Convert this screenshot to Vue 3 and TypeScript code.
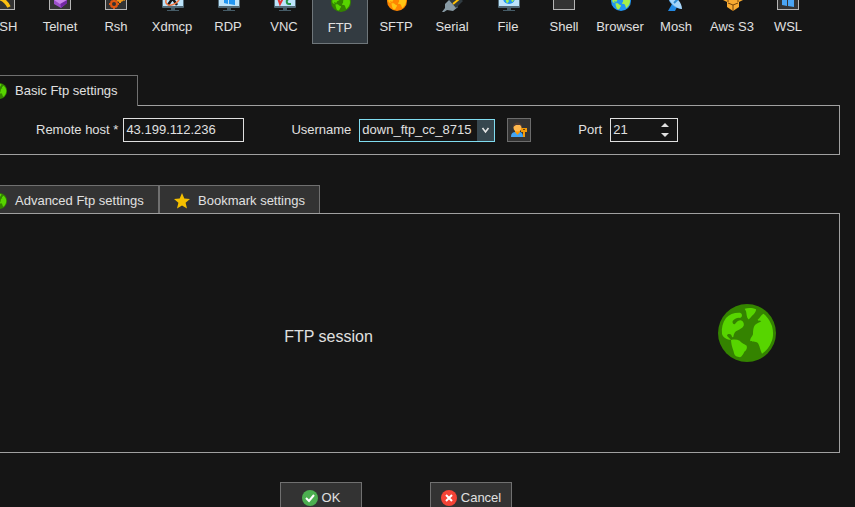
<script setup lang="ts">
import { ref } from 'vue'

interface Session {
  name: string
  icon: string
}

const sessions: Session[] = [
  { name: 'SSH', icon: 'key' },
  { name: 'Telnet', icon: 'cube' },
  { name: 'Rsh', icon: 'gears' },
  { name: 'Xdmcp', icon: 'x' },
  { name: 'RDP', icon: 'windows' },
  { name: 'VNC', icon: 'vnc' },
  { name: 'FTP', icon: 'globe' },
  { name: 'SFTP', icon: 'globe-orange' },
  { name: 'Serial', icon: 'plug' },
  { name: 'File', icon: 'file' },
  { name: 'Shell', icon: 'shell' },
  { name: 'Browser', icon: 'globe-blue' },
  { name: 'Mosh', icon: 'dish' },
  { name: 'Aws S3', icon: 'boxes' },
  { name: 'WSL', icon: 'wsl' },
]

const boxed = ['key', 'cube', 'gears', 'shell', 'wsl']
const screens = ['x', 'windows', 'vnc', 'file']

const active = ref('FTP')
const host = ref('43.199.112.236')
const username = ref('down_ftp_cc_8715')
const port = ref(21)
</script>

<template>
  <main class="page">
    <svg class="defs" aria-hidden="true">
      <symbol id="land" viewBox="0 0 174 174">
        <path d="M12 90C10 72 14 56 24 42C34 30 50 25 66 26C74 29 74 39 66 42C58 40 49 45 44 51C42 58 47 62 51 60C56 54 61 49 68 49C76 51 79 59 77 65C73 73 65 75 60 79C50 82 48 90 46 99C42 101 42 98 40 93C37 89 29 89 27 94C27 99 34 101 39 108C28 107 15 101 12 90Z" />
        <path d="M39 108C48 106 57 106 65 110C70 117 79 120 86 125C88 132 86 138 79 143C76 150 72 157 66 160C57 159 50 156 48 148C47 138 40 128 39 108Z" />
        <path d="M80 14C90 11 104 11 114 16C115 23 107 32 101 37C96 43 92 47 91 46C85 40 86 28 84 22Z" />
        <path d="M136 29C144 33 157 51 162 66C167 85 166 101 160 114C155 129 144 142 132 149C127 140 126 128 121 119C116 111 105 115 97 111C94 105 103 98 105 91C105 80 106 68 111 63C117 57 126 56 130 51C125 49 120 52 119 47C126 42 129 32 136 29Z" />
      </symbol>
      <symbol id="globe" viewBox="0 0 174 174">
        <circle cx="87" cy="87" r="87" fill="#348300" />
        <use href="#land" width="174" height="174" fill="#57d500" />
      </symbol>
      <symbol id="globe-orange" viewBox="0 0 174 174">
        <circle cx="87" cy="87" r="87" fill="#ff8500" />
        <use href="#land" width="174" height="174" fill="#ffc514" />
      </symbol>
      <symbol id="globe-blue" viewBox="0 0 174 174">
        <circle cx="87" cy="87" r="87" fill="#2196f3" />
        <use href="#land" width="174" height="174" fill="#a5f04b" />
      </symbol>
    </svg>

    <nav class="sessions" aria-label="Session type">
      <button
        v-for="s in sessions"
        :key="s.name"
        type="button"
        class="session"
        :class="{ active: s.name === active }"
        @click="active = s.name"
      >
        <svg class="session-icon" viewBox="0 0 24 24" aria-hidden="true">
          <rect v-if="boxed.includes(s.icon)" x="1.5" y="0.5" width="21" height="21" fill="#333" stroke="#b5b5b5" />
          <template v-if="screens.includes(s.icon)">
            <path d="M11 20h4v2h4v1H7v-1h4z" fill="#465c67" />
            <rect x="2" y="2" width="22" height="18" rx="1" fill="#526a77" />
            <rect x="3" y="3" width="20" height="15" fill="#bde4fb" />
          </template>
          <path v-if="s.icon === 'key'" d="M4 10c6 0 10 3 13 9" fill="none" stroke="#fcc010" stroke-width="3.5" />
          <template v-else-if="s.icon === 'cube'">
            <path d="M6 7l7-3 6 3v8l-6 5-7-4z" fill="#9c4fca" />
            <path d="M12 12l7-3v6l-6 5z" fill="#7327a5" />
            <path d="M6 12l7-4 6 4-7 4z" fill="#cb86ec" />
          </template>
          <template v-else-if="s.icon === 'gears'">
            <circle cx="10" cy="16" r="3" fill="none" stroke="#df5712" stroke-width="2" />
            <path d="M10 11v2M10 19v2M5 16h2M13 16h2M7 13l1 1M12 18l1 1M13 13l-1 1M7 19l1-1" stroke="#df5712" stroke-width="2" />
            <circle cx="16" cy="10" r="3" fill="none" stroke="#f39816" stroke-width="2" />
            <path d="M16 13v2M19 11l2 1" stroke="#f39816" stroke-width="2" />
          </template>
          <template v-else-if="s.icon === 'x'">
            <path d="M8 4l9 13M17 4L8 17" stroke="#151515" stroke-width="2.5" />
            <ellipse cx="13" cy="11" rx="8" ry="5" transform="rotate(-35 13 11)" fill="none" stroke="#f1743e" stroke-width="1.5" />
          </template>
          <path v-else-if="s.icon === 'windows'" d="M8 6l4-1v5H8zM13 5l6-1v6h-6zM8 11h4v5l-4-1zM13 11h6v6l-6-1z" fill="#2196f3" />
          <template v-else-if="s.icon === 'vnc'">
            <path d="M6 10l2 6 3-6" fill="none" stroke="#e63232" stroke-width="2" />
            <path d="M19 11h-2c-3 0-3 5 0 5h2" fill="none" stroke="#28964a" stroke-width="2" />
          </template>
          <use v-else-if="s.icon === 'file'" href="#globe-blue" x="7" y="4" width="12" height="12" />
          <use v-else-if="s.icon.startsWith('globe')" :href="'#' + s.icon" x="3" y="3" width="20" height="20" />
          <template v-else-if="s.icon === 'plug'">
            <path d="M2 24l3-4v-4l5-5 8 8-5 4-6-1-3 2z" fill="#899ba5" />
            <path d="M9 12l6-6 8 7-7 7z" fill="#303b41" />
            <path d="M13 16l6-5" stroke="#ffc107" stroke-width="2" />
          </template>
          <template v-else-if="s.icon === 'dish'">
            <path d="M8 16l-4 7h7l2-4z" fill="#2389e3" />
            <path d="M4 6c-1 8 7 15 14 15z" fill="#64b5f6" />
            <path d="M4 6c6 0 14 8 14 15-7-1-14-8-14-15z" fill="#a7d6fb" />
            <path d="M10 15l6-6" stroke="#318cd3" stroke-width="2" />
          </template>
          <template v-else-if="s.icon === 'boxes'">
            <path d="M3 6l5-2 5 3 5-3 5 2v6l-4 2v5l-6 4-6-4v-5l-4-2z" fill="#f9ab31" />
            <path d="M8 15l5 2 5-2M13 17v6M3 8l5 2 5-3 5 3 5-2M8 10v4M18 10v4" fill="none" stroke="#76450c" />
          </template>
          <path v-else-if="s.icon === 'wsl'" d="M6 5l5-1v7H6zM12 4l6-1v8h-6zM6 12h5v6l-5-1zM12 12h6v7l-6-1z" fill="#4aa5f5" />
        </svg>
        <span>{{ s.name }}</span>
      </button>
    </nav>

    <section class="group basic">
      <div class="tabs">
        <button type="button" class="tab current">
          <svg class="tab-icon" viewBox="0 0 16 16" aria-hidden="true"><use href="#globe" x="0" y="0" width="16" height="16" /></svg>
          Basic Ftp settings
        </button>
      </div>
      <form class="panel fields" @submit.prevent>
        <div class="field host">
          <label for="host">Remote host *</label>
          <input id="host" v-model="host" class="box" type="text" />
        </div>
        <div class="field">
          <label for="user">Username</label>
          <div class="combo">
            <select id="user" v-model="username">
              <option>down_ftp_cc_8715</option>
            </select>
            <svg class="chevron" viewBox="0 0 17 21" aria-hidden="true">
              <path d="M5.5 8l3 4 3-4" fill="none" stroke="#e6e6e6" stroke-width="1.6" />
            </svg>
          </div>
          <button type="button" class="credentials" aria-label="Manage credentials">
            <svg viewBox="0 0 16 16" aria-hidden="true">
              <path d="M0 15c0-4 2-5 5-5h3c3 0 4 2 4 5z" fill="#42a5f5" />
              <path d="M4 10l2.500 3L9 10V8H4z" fill="#ff9800" />
              <circle cx="6.500" cy="5.500" r="4" fill="#ffb74d" />
              <path d="M2 5c0-6 9-6 9 0L9 3H5z" fill="#4e3a34" />
              <path d="M10 6h6v4h-2v5h-2v-5h-2z" fill="#f39a08" />
              <path d="M12 7.500h2" stroke="#6b4308" />
            </svg>
          </button>
        </div>
        <div class="field">
          <label for="port">Port</label>
          <div class="box spinner">
            <input id="port" v-model.number="port" type="number" />
            <div class="steps">
              <button type="button" aria-label="Increase port" @click="port++">
                <svg viewBox="0 0 8 4" aria-hidden="true"><path d="M0 4l4-4 4 4z" fill="#e0e0e0" /></svg>
              </button>
              <button type="button" aria-label="Decrease port" @click="port--">
                <svg viewBox="0 0 8 4" aria-hidden="true"><path d="M0 0l4 4 4-4z" fill="#e0e0e0" /></svg>
              </button>
            </div>
          </div>
        </div>
      </form>
    </section>

    <section class="group">
      <div class="tabs">
        <button type="button" class="tab advanced">
          <svg class="tab-icon" viewBox="0 0 16 16" aria-hidden="true"><use href="#globe" x="0" y="0" width="16" height="16" /></svg>
          Advanced Ftp settings
        </button>
        <button type="button" class="tab bookmark">
          <svg class="tab-icon" viewBox="0 0 16 16" aria-hidden="true">
            <path d="M8 0l2.300 5.500 5.700.500-4.400 3.800L13 15.500l-5-3-5 3 1.400-5.700L0 6l5.700-.500z" fill="#f5c000" />
          </svg>
          Bookmark settings
        </button>
      </div>
      <div class="panel summary">
        <p>FTP session</p>
        <svg class="emblem" aria-hidden="true"><use href="#globe" width="58" height="58" /></svg>
      </div>
    </section>

    <footer class="actions">
      <button type="button" class="action">
        <svg viewBox="0 0 16 16" aria-hidden="true">
          <circle cx="8" cy="8" r="8" fill="#4caf50" />
          <path d="M4 8l3 3 5-6" fill="none" stroke="#fff" stroke-width="2" />
        </svg>
        OK
      </button>
      <button type="button" class="action">
        <svg viewBox="0 0 16 16" aria-hidden="true">
          <circle cx="8" cy="8" r="8" fill="#f44336" />
          <path d="M5 5l6 6M11 5l-6 6" fill="none" stroke="#fff" stroke-width="2" />
        </svg>
        Cancel
      </button>
    </footer>
  </main>
</template>

<style>
body {
  background: #151515;
  overflow: hidden;
}
</style>

<style scoped>
.page {
  margin: -16px 15px 0 -24px;
  color: #e0e0e0;
  font: 13px/16px "Liberation Sans", Arial, sans-serif;
}
.page button,
.page input,
.page select {
  margin: 0;
  padding: 0;
  box-sizing: border-box;
  border: 0;
  border-radius: 0;
  background: none;
  color: inherit;
  font: inherit;
  outline: none;
}
.defs {
  display: block;
  width: 0;
  height: 0;
}
.page .sessions {
  display: flex;
  height: 60px;
  margin-bottom: 31px;
}
.page .session {
  display: flex;
  flex: 0 0 56px;
  flex-direction: column;
  align-items: center;
  gap: 7px;
  padding-top: 4px;
  white-space: nowrap;
}
.page .session.active {
  border: 1px solid #6f767a;
  background: #333b41;
}
.session-icon {
  width: 24px;
  height: 24px;
}
.group {
  margin-bottom: 30px;
}
.group + .group {
  margin-bottom: 29px;
}
.tabs {
  display: flex;
}
.page .tab {
  display: flex;
  align-items: center;
  gap: 8px;
  height: 28px;
  padding: 2px 14px 0;
  border: 1px solid #707070;
  border-bottom: 0;
  background: #333;
  white-space: nowrap;
}
.page .tab.advanced {
  min-width: 183px;
}
.page .tab.bookmark {
  min-width: 161px;
}
.page .tab.current {
  position: relative;
  height: 31px;
  min-width: 162px;
  margin-bottom: -1px;
  padding: 0 14px;
  background: #151515;
}
.tab-icon {
  width: 16px;
  height: 16px;
}
.panel {
  border: 1px solid #a0a0a0;
}
.fields {
  display: flex;
  align-items: center;
  gap: 47px;
  height: 48px;
  padding-left: 59px;
}
.field {
  display: flex;
  align-items: center;
  gap: 8px;
  white-space: nowrap;
}
.field.host {
  gap: 5px;
}
.page .box {
  box-sizing: border-box;
  width: 121px;
  height: 24px;
  padding: 0 2px;
  border: 1px solid #e0e0e0;
}
.page .host .box {
  padding-bottom: 2px;
}
.combo {
  display: flex;
  position: relative;
  width: 134px;
  height: 21px;
  border: 1px solid #80dcf0;
}
.combo select {
  width: 100%;
  appearance: none;
}
.page .combo select {
  padding: 0 18px 0 2px;
}
.combo option {
  background: #151515;
}
.chevron {
  position: absolute;
  top: 0;
  right: 0;
  width: 17px;
  height: 21px;
  background: #37474f;
  pointer-events: none;
}
.page .credentials {
  display: flex;
  align-items: center;
  justify-content: center;
  width: 24px;
  height: 24px;
  margin-left: 4px;
  border: 1px solid #6c6c6c;
  background: #333;
}
.credentials svg,
.action svg {
  width: 16px;
  height: 16px;
}
.page .spinner {
  display: flex;
  align-items: center;
  width: 68px;
}
.spinner input {
  flex: 1;
  min-width: 0;
  appearance: textfield;
}
.spinner input::-webkit-inner-spin-button {
  appearance: none;
}
.steps {
  display: flex;
  flex-direction: column;
  gap: 6px;
  width: 14px;
}
.steps button {
  display: flex;
}
.steps svg {
  width: 8px;
  height: 4px;
}
.summary {
  display: grid;
  grid-template-columns: 1fr 134px;
  align-items: center;
  height: 238px;
  padding-right: 25px;
  text-align: center;
}
.summary p {
  margin: 0;
  padding-top: 8px;
  font-size: 16px;
}
.emblem {
  justify-self: center;
  width: 58px;
  height: 58px;
}
.actions {
  display: flex;
  gap: 68px;
  padding-left: 304px;
}
.page .action {
  display: flex;
  align-items: center;
  justify-content: center;
  gap: 4px;
  width: 82px;
  height: 32px;
  border: 1px solid #707070;
  background: #333;
}
</style>
